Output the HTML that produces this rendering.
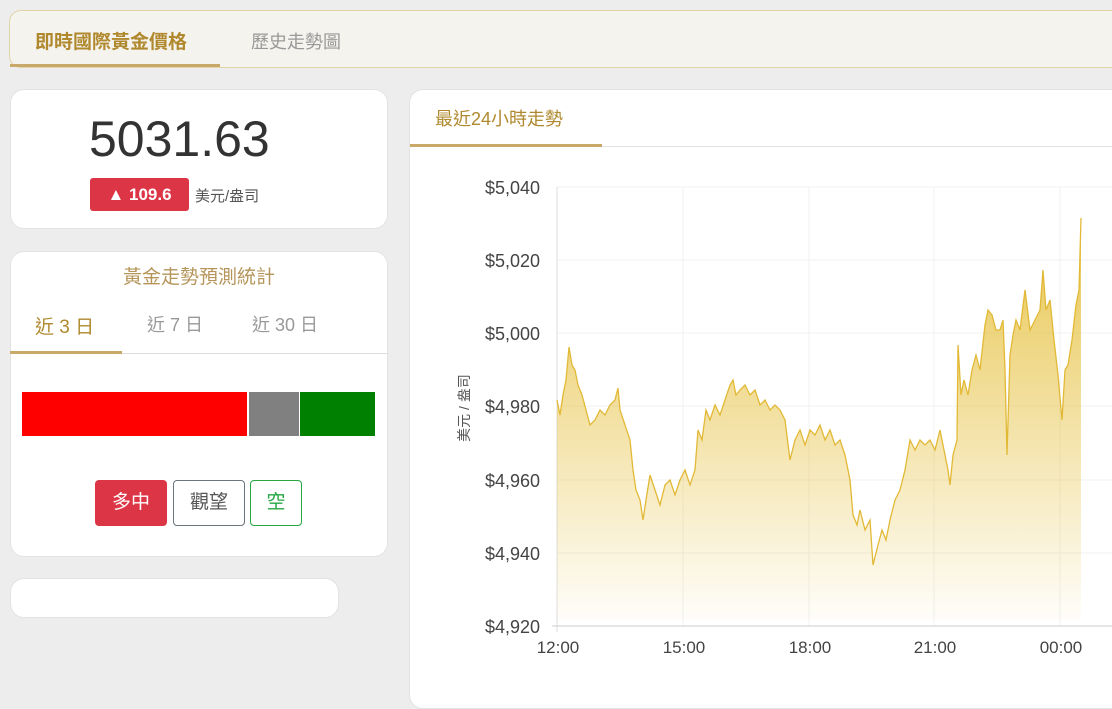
<!DOCTYPE html>
<html><head><meta charset="utf-8"><style>
body{margin:0;width:1112px;height:686px;background:#ededed;font-family:"Liberation Sans","Noto Sans CJK TC",sans-serif;overflow:hidden;position:relative}
.abs{position:absolute}
.card{position:absolute;background:#fff;border:1px solid #e2e2e2;border-radius:14px;box-sizing:border-box}
</style></head><body>
<div class="abs" style="left:9px;top:10px;width:1120px;height:58px;background:#f5f3ee;border:1px solid #e2d4a8;border-radius:12px;box-sizing:border-box"></div>
<div class="abs" style="left:35px;top:27px;font-size:19px;font-weight:bold;color:#b0892e">即時國際黃金價格</div>
<div class="abs" style="left:10px;top:64px;width:210px;height:3px;background:#c9a96a"></div>
<div class="abs" style="left:251px;top:28px;font-size:18px;color:#999">歷史走勢圖</div>

<div class="card" style="left:10px;top:89px;width:378px;height:140px"></div>
<div class="abs" style="left:89px;top:110px;font-size:50px;color:#333">5031.63</div>
<div class="abs" style="left:90px;top:178px;width:99px;height:33px;background:#dc3545;border-radius:3px;color:#fff;font-weight:bold;font-size:17px;line-height:33px;text-align:center">▲ 109.6</div>
<div class="abs" style="left:195px;top:185px;font-size:15px;color:#555">美元/盎司</div>

<div class="card" style="left:10px;top:251px;width:378px;height:306px"></div>
<div class="abs" style="left:10px;top:262px;width:378px;text-align:center;font-size:19px;color:#b5955a">黃金走勢預測統計</div>
<div class="abs" style="left:35px;top:312px;font-size:19px;color:#b0892e">近 3 日</div>
<div class="abs" style="left:147px;top:311px;font-size:18px;color:#999">近 7 日</div>
<div class="abs" style="left:252px;top:311px;font-size:18px;color:#999">近 30 日</div>
<div class="abs" style="left:10px;top:353px;width:378px;height:1px;background:#ddd"></div>
<div class="abs" style="left:10px;top:351px;width:112px;height:3px;background:#c9a96a"></div>
<div class="abs" style="left:22px;top:392px;width:225px;height:44px;background:#f00"></div>
<div class="abs" style="left:249px;top:392px;width:50px;height:44px;background:#808080"></div>
<div class="abs" style="left:300px;top:392px;width:75px;height:44px;background:#008000"></div>
<div class="abs" style="left:95px;top:480px;width:72px;height:46px;background:#dc3545;border-radius:4px;color:#fff;font-size:19px;line-height:46px;text-align:center">多中</div>
<div class="abs" style="left:173px;top:480px;width:72px;height:46px;border:1px solid #6c757d;box-sizing:border-box;border-radius:4px;color:#555;font-size:19px;line-height:44px;text-align:center">觀望</div>
<div class="abs" style="left:250px;top:480px;width:52px;height:46px;border:1px solid #28a745;box-sizing:border-box;border-radius:4px;color:#28a745;font-size:19px;line-height:44px;text-align:center">空</div>

<div class="card" style="left:10px;top:578px;width:329px;height:40px"></div>

<div class="card" style="left:409px;top:89px;width:720px;height:620px"></div>
<div class="abs" style="left:435px;top:105px;font-size:18px;color:#b0892e">最近24小時走勢</div>
<div class="abs" style="left:410px;top:146px;width:702px;height:1px;background:#e2e2e2"></div>
<div class="abs" style="left:410px;top:144px;width:192px;height:3px;background:#c9a96a"></div>

<svg class="abs" style="left:0;top:0" width="1112" height="686">
<defs><linearGradient id="g" gradientUnits="userSpaceOnUse" x1="0" y1="230" x2="0" y2="620"><stop offset="0" stop-color="#e6c141" stop-opacity="0.9"/><stop offset="1" stop-color="#e6c141" stop-opacity="0.03"/></linearGradient></defs>
<g stroke="#f0f0f0" stroke-width="1">
<line x1="557" y1="187" x2="1112" y2="187"/><line x1="557" y1="260" x2="1112" y2="260"/><line x1="557" y1="333" x2="1112" y2="333"/><line x1="557" y1="406" x2="1112" y2="406"/><line x1="557" y1="480" x2="1112" y2="480"/><line x1="557" y1="553" x2="1112" y2="553"/>
<line x1="683" y1="187" x2="683" y2="626"/><line x1="809" y1="187" x2="809" y2="626"/><line x1="934" y1="187" x2="934" y2="626"/><line x1="1060" y1="187" x2="1060" y2="626"/>
</g>
<line x1="557" y1="187" x2="557" y2="632" stroke="#ddd"/>
<line x1="552" y1="626" x2="1112" y2="626" stroke="#ccc"/>
<path d="M557,400 L560,415 563,395 566,380 569,347 572,365 575,370 578,385 582,395 586,410 590,425 595,420 600,410 605,415 610,405 615,400 618,388 620,410 625,425 630,440 633,470 636,490 640,500 643,520 646,500 650,475 655,490 660,505 665,485 670,480 675,495 680,480 685,470 690,485 695,470 698,430 702,440 706,410 710,420 715,405 720,415 725,400 730,385 733,380 736,395 740,390 745,385 750,395 755,390 760,405 765,400 770,410 775,405 780,410 785,420 790,460 795,440 800,430 805,445 810,430 815,435 820,425 825,440 830,430 835,445 840,440 845,455 850,480 853,515 857,525 860,510 865,530 870,520 873,565 878,545 882,530 886,540 890,520 895,500 900,490 905,470 910,440 915,450 920,440 925,445 930,440 935,450 940,430 945,455 948,470 950,485 953,455 957,440 958,345 961,395 964,380 968,395 972,370 976,355 980,370 985,325 988,310 992,315 996,330 1000,330 1003,320 1005,370 1007,455 1010,355 1013,335 1016,320 1020,330 1025,290 1030,330 1035,320 1040,310 1043,270 1046,310 1050,300 1054,340 1058,375 1062,420 1065,370 1068,365 1072,340 1076,305 1079,290 1081,218 L1081,620 L557,620 Z" fill="url(#g)" stroke="none"/>
<path d="M557,400 L560,415 563,395 566,380 569,347 572,365 575,370 578,385 582,395 586,410 590,425 595,420 600,410 605,415 610,405 615,400 618,388 620,410 625,425 630,440 633,470 636,490 640,500 643,520 646,500 650,475 655,490 660,505 665,485 670,480 675,495 680,480 685,470 690,485 695,470 698,430 702,440 706,410 710,420 715,405 720,415 725,400 730,385 733,380 736,395 740,390 745,385 750,395 755,390 760,405 765,400 770,410 775,405 780,410 785,420 790,460 795,440 800,430 805,445 810,430 815,435 820,425 825,440 830,430 835,445 840,440 845,455 850,480 853,515 857,525 860,510 865,530 870,520 873,565 878,545 882,530 886,540 890,520 895,500 900,490 905,470 910,440 915,450 920,440 925,445 930,440 935,450 940,430 945,455 948,470 950,485 953,455 957,440 958,345 961,395 964,380 968,395 972,370 976,355 980,370 985,325 988,310 992,315 996,330 1000,330 1003,320 1005,370 1007,455 1010,355 1013,335 1016,320 1020,330 1025,290 1030,330 1035,320 1040,310 1043,270 1046,310 1050,300 1054,340 1058,375 1062,420 1065,370 1068,365 1072,340 1076,305 1079,290 1081,218" fill="none" stroke="#e2b936" stroke-width="1.3"/>
<g font-family="Liberation Sans, sans-serif" font-size="18" fill="#444" text-anchor="end">
<text x="540" y="194">$5,040</text><text x="540" y="267">$5,020</text><text x="540" y="340">$5,000</text><text x="540" y="413">$4,980</text><text x="540" y="487">$4,960</text><text x="540" y="560">$4,940</text><text x="540" y="633">$4,920</text>
</g>
<g font-family="Liberation Sans, sans-serif" font-size="17" fill="#444" text-anchor="middle">
<text x="558" y="653">12:00</text><text x="684" y="653">15:00</text><text x="810" y="653">18:00</text><text x="935" y="653">21:00</text><text x="1061" y="653">00:00</text>
</g>
<text transform="translate(469,408) rotate(-90)" text-anchor="middle" font-family="Liberation Sans, Noto Sans CJK TC, sans-serif" font-size="14" fill="#555">美元 / 盎司</text>
</svg>
</body></html>
